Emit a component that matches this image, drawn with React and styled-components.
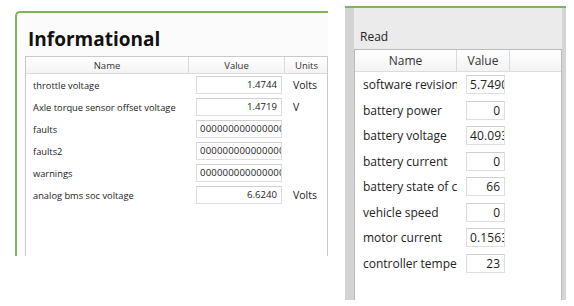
import React from "react";
import styled, { createGlobalStyle } from "styled-components";

const Global = createGlobalStyle`
  html, body { margin: 0; padding: 0; background: #fff; }
  body { width: 574px; height: 306px; overflow: hidden; font-family: "Open Sans", "Liberation Sans", sans-serif; }
`;

const Page = styled.div`
  display: flex;
  width: 574px;
  height: 306px;
`;

const LeftShot = styled.div`
  width: 345px;
  padding: 11px 0 0 15px;
  box-sizing: border-box;
`;

const InfoPanel = styled.div`
  width: 313px;
  height: 245px;
  box-sizing: border-box;
  border-left: 2px solid #7db55a;
  border-top: 2px solid #7db55a;
  border-top-left-radius: 5px;
  background: #fbfbfb;
  overflow: hidden;
  padding: 15px 0 0 8px;
`;

const Title = styled.h1`
  margin: 0 0 5px 3px;
  font-family: "Open Sans", sans-serif;
  font-weight: 700;
  font-size: 19px;
  line-height: 23px;
  color: #111;
`;

const Grid = styled.div`
  border: 1px solid #c9c9c9;
  background: #fff;
  height: 300px;
  font-family: "Open Sans", sans-serif;
  color: #222;
`;

const HeadRow = styled.div`
  display: grid;
  grid-template-columns: ${(p) => p.$cols};
  height: ${(p) => p.$h}px;
  background: linear-gradient(#ffffff, #f3f3f3);
  border-bottom: 1px solid #dcdcdc;
`;

const HeadCell = styled.div`
  display: flex;
  align-items: center;
  justify-content: center;
  font-size: ${(p) => p.$fs}px;
  border-right: ${(p) => (p.$last ? "none" : "1px solid #dadada")};
  color: #333;
`;

const Row = styled.div`
  display: grid;
  grid-template-columns: ${(p) => p.$cols};
  height: ${(p) => p.$h}px;
  align-items: center;
`;

const NameCell = styled.div`
  font-size: ${(p) => p.$fs}px;
  padding-left: ${(p) => p.$pl}px;
  white-space: nowrap;
  overflow: hidden;
  text-overflow: clip;
`;

const ValueBox = styled.div`
  height: ${(p) => p.$h}px;
  margin-left: ${(p) => p.$ml}px;
  width: ${(p) => p.$w}px;
  box-sizing: border-box;
  border: 1px solid #dedede;
  border-top-color: #cfcfcf;
  background: #fff;
  font-size: ${(p) => p.$fs}px;
  line-height: ${(p) => p.$h - 2}px;
  text-align: ${(p) => (p.$clip ? "left" : "right")};
  padding: 0 ${(p) => (p.$clip ? 0 : 4)}px 0 ${(p) => (p.$clip ? 3 : 0)}px;
  letter-spacing: ${(p) => (p.$clip ? 0.15 : 0)}px;
  white-space: nowrap;
  overflow: hidden;
  color: #222;
`;

const Unit = styled.div`
  font-size: 10.5px;
  padding-left: 8px;
`;

const RightShot = styled.div`
  flex: 1;
  padding-top: 6px;
  box-sizing: border-box;
`;

const ReadFrame = styled.div`
  width: 221px;
  height: 294px;
  box-sizing: border-box;
  border-top: 2px solid #7db55a;
  background: #ebebeb;
  display: flex;
`;

const SideBar = styled.div`
  width: ${(p) => p.$w}px;
  background: #d4d4d4;
`;

const ReadBody = styled.div`
  width: 208px;
  display: flex;
  flex-direction: column;
  padding-top: 20px;
`;

const ReadLabel = styled.div`
  font-size: 12px;
  color: #222;
  padding-left: 6px;
  height: 21px;
`;

const ReadGrid = styled.div`
  flex: 1;
  border: 1px solid #b9b9b9;
  border-bottom: none;
  background: #fff;
  font-family: "Open Sans", sans-serif;
  color: #222;
`;

const leftRows = [
  { name: "throttle voltage", value: "1.4744", unit: "Volts" },
  { name: "Axle torque sensor offset voltage", value: "1.4719", unit: "V" },
  { name: "faults", value: "0000000000000000", clip: true },
  { name: "faults2", value: "0000000000000000", clip: true },
  { name: "warnings", value: "0000000000000000", clip: true },
  { name: "analog bms soc voltage", value: "6.6240", unit: "Volts" },
];

const rightRows = [
  { name: "software revision", value: "5.7490", clip: true },
  { name: "battery power", value: "0" },
  { name: "battery voltage", value: "40.093", clip: true },
  { name: "battery current", value: "0" },
  { name: "battery state of charge", value: "66" },
  { name: "vehicle speed", value: "0" },
  { name: "motor current", value: "0.1563", clip: true },
  { name: "controller temperature", value: "23" },
];

const LCOLS = "163px 96px 43px";
const RCOLS = "102px 53px 1fr";

export default function App() {
  return (
    <Page>
      <Global />
      <LeftShot>
        <InfoPanel>
          <Title>Informational</Title>
          <Grid>
            <HeadRow $cols={LCOLS} $h={16}>
              <HeadCell $fs={9.5}>Name</HeadCell>
              <HeadCell $fs={9.5}>Value</HeadCell>
              <HeadCell $fs={9.5} $last>Units</HeadCell>
            </HeadRow>
            {leftRows.map((r) => (
              <Row key={r.name} $cols={LCOLS} $h={22}>
                <NameCell $fs={9.3} $pl={7}>{r.name}</NameCell>
                <ValueBox $h={18} $w={86} $ml={7} $fs={9.6} $clip={r.clip}>
                  {r.value}
                </ValueBox>
                <Unit>{r.unit}</Unit>
              </Row>
            ))}
          </Grid>
        </InfoPanel>
      </LeftShot>
      <RightShot>
        <ReadFrame>
          <SideBar $w={9} />
          <ReadBody>
            <ReadLabel>Read</ReadLabel>
            <ReadGrid>
              <HeadRow $cols={RCOLS} $h={21}>
                <HeadCell $fs={12}>Name</HeadCell>
                <HeadCell $fs={12}>Value</HeadCell>
                <HeadCell $fs={12} $last></HeadCell>
              </HeadRow>
              {rightRows.map((r) => (
                <Row key={r.name} $cols={RCOLS} $h={25.5}>
                  <NameCell $fs={12} $pl={8}>{r.name}</NameCell>
                  <ValueBox $h={19} $w={39} $ml={9} $fs={12} $clip={r.clip}>
                    {r.value}
                  </ValueBox>
                  <div />
                </Row>
              ))}
            </ReadGrid>
          </ReadBody>
          <SideBar $w={4} />
        </ReadFrame>
      </RightShot>
    </Page>
  );
}
